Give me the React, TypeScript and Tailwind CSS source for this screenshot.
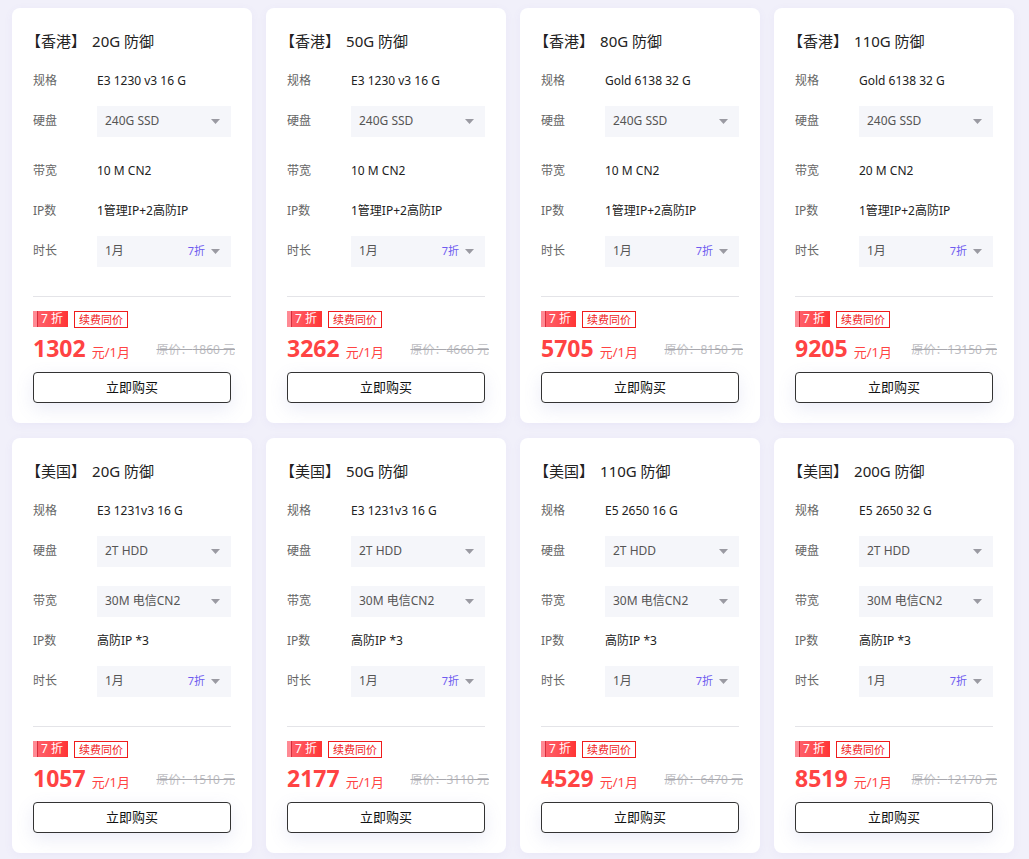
import React from "react";

type Card = {
  region: string;
  def: string;
  spec: string;
  disk: string;
  bw: string;
  bwSelect: boolean;
  ip: string;
  price: string;
  orig: string;
};

const cards: Card[] = [
  { region: "香港", def: "20G", spec: "E3 1230 v3 16 G", disk: "240G SSD", bw: "10 M CN2", bwSelect: false, ip: "1管理IP+2高防IP", price: "1302", orig: "1860" },
  { region: "香港", def: "50G", spec: "E3 1230 v3 16 G", disk: "240G SSD", bw: "10 M CN2", bwSelect: false, ip: "1管理IP+2高防IP", price: "3262", orig: "4660" },
  { region: "香港", def: "80G", spec: "Gold 6138 32 G", disk: "240G SSD", bw: "10 M CN2", bwSelect: false, ip: "1管理IP+2高防IP", price: "5705", orig: "8150" },
  { region: "香港", def: "110G", spec: "Gold 6138 32 G", disk: "240G SSD", bw: "20 M CN2", bwSelect: false, ip: "1管理IP+2高防IP", price: "9205", orig: "13150" },
  { region: "美国", def: "20G", spec: "E3 1231v3 16 G", disk: "2T HDD", bw: "30M 电信CN2", bwSelect: true, ip: "高防IP *3", price: "1057", orig: "1510" },
  { region: "美国", def: "50G", spec: "E3 1231v3 16 G", disk: "2T HDD", bw: "30M 电信CN2", bwSelect: true, ip: "高防IP *3", price: "2177", orig: "3110" },
  { region: "美国", def: "110G", spec: "E5 2650 16 G", disk: "2T HDD", bw: "30M 电信CN2", bwSelect: true, ip: "高防IP *3", price: "4529", orig: "6470" },
  { region: "美国", def: "200G", spec: "E5 2650 32 G", disk: "2T HDD", bw: "30M 电信CN2", bwSelect: true, ip: "高防IP *3", price: "8519", orig: "12170" },
];

const Caret = () => (
  <svg width="9" height="5" viewBox="0 0 9 5" className="shrink-0">
    <path d="M0 0 L9 0 L4.5 5 Z" fill="#9a9aa2" />
  </svg>
);

const Select = ({ value, tag }: { value: string; tag?: string }) => (
  <div className="flex h-[31px] w-[134px] items-center bg-[#f5f6fa] pl-[8px] pr-[11px] text-[12px] text-[#555]">
    <span className="flex-1">{value}</span>
    {tag && <span className="mr-[6px] text-[11px] text-[#6f5cf0]">{tag}</span>}
    <Caret />
  </div>
);

const Row = ({ label, children, mb = "mb-[10px]" }: { label: string; children: React.ReactNode; mb?: string }) => (
  <div className={`flex h-[30px] items-center ${mb}`}>
    <div className="w-[64px] shrink-0 text-[12px] text-[#666]">{label}</div>
    <div className="text-[12px] text-[#222]">{children}</div>
  </div>
);

const ProductCard = ({ c }: { c: Card }) => (
  <div className="flex h-[415px] w-[240px] flex-col rounded-[8px] bg-white px-[21px] pt-[23px] shadow-[0_2px_10px_rgba(120,110,200,0.06)]">
    <div className="mb-[15px] h-[20px] text-[15px] leading-[20px] text-[#222]">
      <span className="ml-[-7px]">【{c.region}】</span>
      <span className="ml-[6px]">{c.def} 防御</span>
    </div>
    <Row label="规格">{c.spec}</Row>
    <Row label="硬盘" mb="mb-[20px]">
      <Select value={c.disk} />
    </Row>
    <Row label="带宽">{c.bwSelect ? <Select value={c.bw} /> : c.bw}</Row>
    <Row label="IP数">{c.ip}</Row>
    <Row label="时长" mb="mb-0">
      <Select value="1月" tag="7折" />
    </Row>
    <div className="mt-[30px] h-px w-full bg-[#e4e4e8]" />
    <div className="mt-[14px] flex h-[16px] items-stretch">
      <div className="flex h-[16px] items-stretch">
        <div className="w-[4px] bg-[#ff8a94]" />
        <div className="w-[1px] bg-[#d92e3c]" />
        <div className="flex items-center bg-gradient-to-r from-[#ff5d68] to-[#ff3434] pl-[3px] pr-[5px] text-[12px] leading-none text-white">
          7 折
        </div>
      </div>
      <div className="ml-[6px] flex h-[17px] items-center border border-[#f01c1c] px-[4px] text-[11px] leading-none text-[#f01c1c]">
        续费同价
      </div>
    </div>
    <div className="mt-[9px] flex h-[26px] items-end justify-between">
      <div className="flex items-baseline text-[#ff4343]">
        <span className="text-[23px] font-bold leading-[26px]">{c.price}</span>
        <span className="ml-[6px] text-[13px]">元/1月</span>
      </div>
      <div className="mr-[-4px] mb-[3px] text-[12px] text-[#bdbdc2] line-through decoration-[#a8a8ae]">
        原价：{c.orig} 元
      </div>
    </div>
    <button className="mt-[10px] flex h-[31px] w-full items-center justify-center rounded-[4px] border border-[#333] bg-white text-[13px] text-[#111] shadow-[0_6px_18px_rgba(110,120,200,0.14)]">
      立即购买
    </button>
  </div>
);

export default function App() {
  return (
    <div
      className="min-h-[859px] w-[1029px] bg-[#f1f0fa] pl-[12px] pt-[8px]"
      style={{ fontFamily: '"Noto Sans", "Noto Sans CJK SC", sans-serif' }}
    >
      <div className="grid grid-cols-[repeat(4,240px)] gap-x-[14px] gap-y-[15px]">
        {cards.map((c, i) => (
          <ProductCard key={i} c={c} />
        ))}
      </div>
    </div>
  );
}
